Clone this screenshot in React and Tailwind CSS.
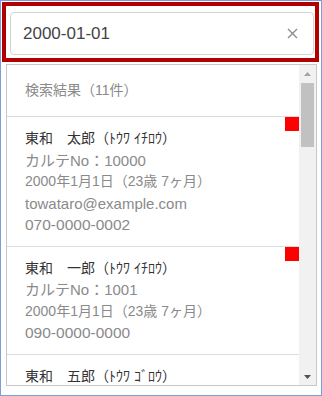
import React from 'react';

const patients = [
  {
    id: 1,
    name: '東和　太郎（ﾄｳﾜ ｲﾁﾛｳ）',
    karte: 'カルテNo：10000',
    birth: '2000年1月1日（23歳 7ヶ月）',
    email: 'towataro@example.com',
    phone: '070-0000-0002',
    flag: true,
  },
  {
    id: 2,
    name: '東和　一郎（ﾄｳﾜ ｲﾁﾛｳ）',
    karte: 'カルテNo：1001',
    birth: '2000年1月1日（23歳 7ヶ月）',
    phone: '090-0000-0000',
    flag: true,
  },
  {
    // only the name row is visible above the fold
    id: 3,
    name: '東和　五郎（ﾄｳﾜ ｺﾞﾛｳ）',
    flag: false,
  },
];

const PatientRow = ({ p }) => (
  <div className="relative border-b border-[#dcdcdc] pl-[18px] pt-[11px] pb-[10px] leading-[21.5px]">
    {p.flag && <div className="absolute top-0 right-0 w-[14px] h-[14px] bg-[#ff0000]" />}
    <div className="text-[14px] text-[#333]">{p.name}</div>
    {p.karte && <div className="text-[15px] text-[#8a8a8a]">{p.karte}</div>}
    {p.birth && <div className="text-[14px] text-[#8a8a8a]">{p.birth}</div>}
    {p.email && <div className="text-[15px] text-[#8a8a8a]">{p.email}</div>}
    {p.phone && <div className="text-[15.5px] text-[#8a8a8a]">{p.phone}</div>}
  </div>
);

export default function App() {
  return (
    <div className="w-[322px] h-[396px] bg-white border border-[#7b9ddb] font-['Liberation_Sans','Noto_Sans_CJK_JP',sans-serif] overflow-hidden">
      {/* search box, highlighted */}
      <div className="mt-[1px] ml-[1px] w-[317px] h-[60px] border-4 border-[#b00000] pl-[4px] pt-[6px]">
        <div className="w-[304px] h-[43px] flex items-center justify-between border border-[#d4d4d4] rounded-[4px] pl-[12px] pr-[15px]">
          <span className="text-[17px] text-[#444]">2000-01-01</span>
          <svg width="11" height="11" viewBox="0 0 11 11">
            <path d="M1 1 L10 10 M10 1 L1 10" stroke="#8a8a8a" strokeWidth="1.3" fill="none" />
          </svg>
        </div>
      </div>

      {/* results list */}
      <div className="mt-[2px] ml-[5px] w-[311px] h-[322px] border border-[#c8c8c8] flex overflow-hidden">
        <div className="flex-1 overflow-hidden">
          <div className="h-[52px] border-b border-[#dcdcdc] pl-[18px] flex items-center text-[14px] text-[#8a8a8a]">
            検索結果（11件）
          </div>
          {patients.map((p) => (
            <PatientRow key={p.id} p={p} />
          ))}
        </div>

        {/* scrollbar */}
        <div className="w-[17px] bg-[#f1f1f1] flex flex-col">
          <div className="h-[18px] flex items-center justify-center">
            <svg width="7" height="4" viewBox="0 0 7 4">
              <path d="M0 4 L3.5 0 L7 4 Z" fill="#a3a3a3" />
            </svg>
          </div>
          <div className="mx-[2px] h-[64px] bg-[#c1c1c1]" />
          <div className="flex-1" />
          <div className="h-[17px] flex items-center justify-center">
            <svg width="7" height="4" viewBox="0 0 7 4">
              <path d="M0 0 L7 0 L3.5 4 Z" fill="#505050" />
            </svg>
          </div>
        </div>
      </div>
    </div>
  );
}
